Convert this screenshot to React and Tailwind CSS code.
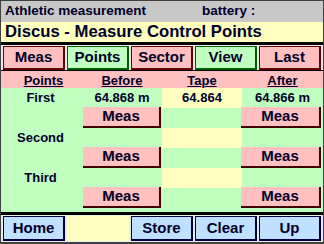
import React from 'react';

const font = { fontFamily: '"Liberation Sans", Arial, sans-serif' };

const TopBtn = ({ label, green }) => (
  <div
    className={`w-[62px] h-[24px] flex items-center justify-center text-[15px] font-bold border-l border-t border-r-2 border-b-2 ${
      green ? 'bg-[#c0ffc0] border-[#006000]' : 'bg-[#ffc0c0] border-[#600000]'
    }`}
  >
    {label}
  </div>
);

const MeasBtn = () => (
  <div className="h-[21px] flex items-center justify-center bg-[#ffc0c0] border-r-2 border-b-2 border-[#400000] text-[15px] font-bold">
    Meas
  </div>
);

const BlueBtn = ({ label }) => (
  <div className="w-[62px] h-[25px] flex items-center justify-center bg-[#c0e0ff] border-l border-t border-r-2 border-b-2 border-[#000040] text-[15px] font-bold">
    {label}
  </div>
);

const DataRow = ({ name, before, tape, after }) => (
  <div className="grid grid-cols-[81px_80px_80px_1fr] h-[19px] text-[13px] font-bold">
    <div className="flex items-center justify-center pr-[2px]">{name}</div>
    <div className="flex items-center justify-center">{before}</div>
    <div className="flex items-center justify-center bg-[#ffffc0]">{tape}</div>
    <div className="flex items-center justify-center">{after}</div>
  </div>
);

const MeasRow = () => (
  <div className="grid grid-cols-[81px_80px_80px_1fr] h-[21px]">
    <div />
    <div className="pl-[1px] pr-[1px]"><MeasBtn /></div>
    <div />
    <div className="pr-[2px] -ml-[1px]"><MeasBtn /></div>
  </div>
);

export default function App() {
  return (
    <div
      className="w-[324px] h-[244px] flex flex-col border border-b-2 border-[#404040] bg-[#ececec] text-[#000028] overflow-hidden"
      style={font}
    >
      <div className="h-[21px] shrink-0 flex items-center bg-[#c8c8c8] text-[13.5px] font-bold">
        <span className="w-[201px] pl-[4px]">Athletic measurement</span>
        <span>battery :</span>
      </div>
      <div className="h-[20px] shrink-0 flex items-center bg-[#ffffc0] pl-[4px] text-[16.7px] font-bold">
        Discus - Measure Control Points
      </div>
      <div className="h-[3px] shrink-0 bg-black" />
      <div className="h-[25px] shrink-0 flex items-start gap-[2px] pl-[2px] pt-[1px]">
        <TopBtn label="Meas" />
        <TopBtn label="Points" green />
        <TopBtn label="Sector" />
        <TopBtn label="View" green />
        <TopBtn label="Last" />
      </div>
      <div className="h-[1px] shrink-0 bg-black" />
      <div className="h-[17px] shrink-0 grid grid-cols-[81px_80px_80px_1fr] bg-[#ffc0c0] text-[13px] font-bold underline">
        <div className="flex items-center justify-center pl-[4px]">Points</div>
        <div className="flex items-center justify-center">Before</div>
        <div className="flex items-center justify-center">Tape</div>
        <div className="flex items-center justify-center">After</div>
      </div>
      <div className="h-[124px] shrink-0 bg-[#c0ffc0]">
        <DataRow name="First" before="64.868 m" tape="64.864" after="64.866 m" />
        <MeasRow />
        <DataRow name="Second" />
        <MeasRow />
        <DataRow name="Third" />
        <MeasRow />
      </div>
      <div className="h-[3px] shrink-0 bg-black" />
      <div className="flex-1 flex items-start gap-[2px] pl-[2px] pt-[1px]">
        <BlueBtn label="Home" />
        <div className="w-[62px] h-[25px] bg-[#ffffc0]" />
        <BlueBtn label="Store" />
        <BlueBtn label="Clear" />
        <BlueBtn label="Up" />
      </div>
    </div>
  );
}
